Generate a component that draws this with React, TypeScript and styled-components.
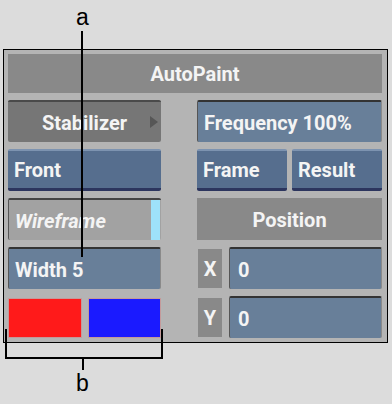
import React from "react";
import styled, { createGlobalStyle, css } from "styled-components";

const GlobalStyle = createGlobalStyle`
  html, body {
    margin: 0;
    padding: 0;
    background: #dcdcdc;
  }
`;

const Figure = styled.div`
  position: relative;
  width: 392px;
  height: 404px;
  background: #dcdcdc;
  padding: 49px 0 0 3px;
  box-sizing: border-box;
`;

const Panel = styled.div`
  width: 385px;
  box-sizing: border-box;
  border: 1px solid #000;
  background: #b4b4b4;
  padding: 4px 5px 4px 4px;
  display: grid;
  grid-template-columns: 153px 1fr;
  grid-template-rows: 39px repeat(5, 42px);
  column-gap: 36px;
  row-gap: 7px;
  font-family: Roboto, "Liberation Sans", Arial, sans-serif;
  font-weight: bold;
  font-size: 20px;
  color: #f4f4f4;
`;

const Title = styled.div`
  grid-column: 1 / span 2;
  background: #898989;
  display: flex;
  align-items: center;
  justify-content: center;
`;

const fieldLook = css`
  background: #687f99;
  border-top: 2px solid #333;
  border-left: 1px solid #555;
  border-right: 1px solid #8a8a8a;
  border-radius: 2px;
`;

const buttonLook = css`
  background: #566e8e;
  border-top: 2px solid #7d93b0;
  border-bottom: 3px solid #2c355e;
  border-radius: 2px;
`;

const Cell = styled.div<{ $kind: "field" | "button" | "menu" | "label"; $align?: "left" | "center" }>`
  box-sizing: border-box;
  display: flex;
  align-items: center;
  justify-content: ${(p) => (p.$align === "center" ? "center" : "flex-start")};
  padding: 1px 6px 0;
  min-width: 0;
  white-space: nowrap;
  ${(p) => p.$kind === "field" && fieldLook}
  ${(p) => p.$kind === "button" && buttonLook}
  ${(p) =>
    p.$kind === "menu" &&
    css`
      background: #767676;
      border-top: 2px solid #4a4a4a;
      border-radius: 2px;
      position: relative;
    `}
  ${(p) =>
    p.$kind === "label" &&
    css`
      background: #898989;
    `}
`;

const Arrow = styled.span`
  position: absolute;
  right: 3px;
  top: 50%;
  transform: translateY(-50%);
  width: 0;
  height: 0;
  border-top: 6px solid transparent;
  border-bottom: 6px solid transparent;
  border-left: 8px solid #565656;
`;

const Toggle = styled.div`
  box-sizing: border-box;
  display: flex;
  background: #a2a2a2;
  border-top: 2px solid #444;
  border-left: 1px solid #555;
  border-radius: 2px;
`;

const ToggleText = styled.span`
  flex: 1;
  display: flex;
  align-items: center;
  padding: 1px 6px 0;
  font-style: italic;
`;

const ToggleLight = styled.span`
  width: 9px;
  background: #9ee2fa;
  margin-right: 1px;
`;

const Pair = styled.div`
  display: flex;
  gap: 5px;
  & > * {
    flex: 1;
  }
`;

const AxisRow = styled.div`
  display: flex;
  gap: 7px;
`;

const Axis = styled.div`
  width: 24px;
  margin: 2px 0 1px 1px;
  background: #898989;
  display: flex;
  align-items: center;
  justify-content: center;
`;

const Value = styled(Cell)`
  flex: 1;
  padding-left: 8px;
`;

const Swatches = styled.div`
  display: flex;
  gap: 6px;
  padding: 2px 0 0;
`;

const Swatch = styled.div<{ $color: string }>`
  flex: 1;
  background: ${(p) => p.$color};
  border: 1px solid #c49a9a;
  box-sizing: border-box;
`;

const Callout = styled.span<{ $x: number; $y: number }>`
  position: absolute;
  left: ${(p) => p.$x}px;
  top: ${(p) => p.$y}px;
  font-family: "Liberation Sans", Arial, sans-serif;
  font-size: 23px;
  line-height: 1;
  color: #000;
`;

const Line = styled.div<{ $x: number; $y: number; $w: number; $h: number }>`
  position: absolute;
  left: ${(p) => p.$x}px;
  top: ${(p) => p.$y}px;
  width: ${(p) => p.$w}px;
  height: ${(p) => p.$h}px;
  background: #000;
`;

export default function App() {
  return (
    <>
      <GlobalStyle />
      <Figure>
        <Panel>
          <Title>AutoPaint</Title>

          <Cell $kind="menu" $align="center">
            Stabilizer
            <Arrow />
          </Cell>
          <Cell $kind="field">Frequency 100%</Cell>

          <Cell $kind="button">Front</Cell>
          <Pair>
            <Cell $kind="button">Frame</Cell>
            <Cell $kind="button">Result</Cell>
          </Pair>

          <Toggle>
            <ToggleText>Wireframe</ToggleText>
            <ToggleLight />
          </Toggle>
          <Cell $kind="label" $align="center">Position</Cell>

          <Cell $kind="field">Width 5</Cell>
          <AxisRow>
            <Axis>X</Axis>
            <Value $kind="field">0</Value>
          </AxisRow>

          <Swatches>
            <Swatch $color="#ff1a1a" />
            <Swatch $color="#1a1aff" />
          </Swatches>
          <AxisRow>
            <Axis>Y</Axis>
            <Value $kind="field">0</Value>
          </AxisRow>
        </Panel>

        <Callout $x={76} $y={6}>a</Callout>
        <Line $x={81} $y={31} $w={2} $h={226} />

        <Line $x={5} $y={329} $w={2} $h={30} />
        <Line $x={161} $y={329} $w={2} $h={30} />
        <Line $x={5} $y={357} $w={158} $h={2} />
        <Line $x={82} $y={357} $w={2} $h={13} />
        <Callout $x={76} $y={372}>b</Callout>
      </Figure>
    </>
  );
}
